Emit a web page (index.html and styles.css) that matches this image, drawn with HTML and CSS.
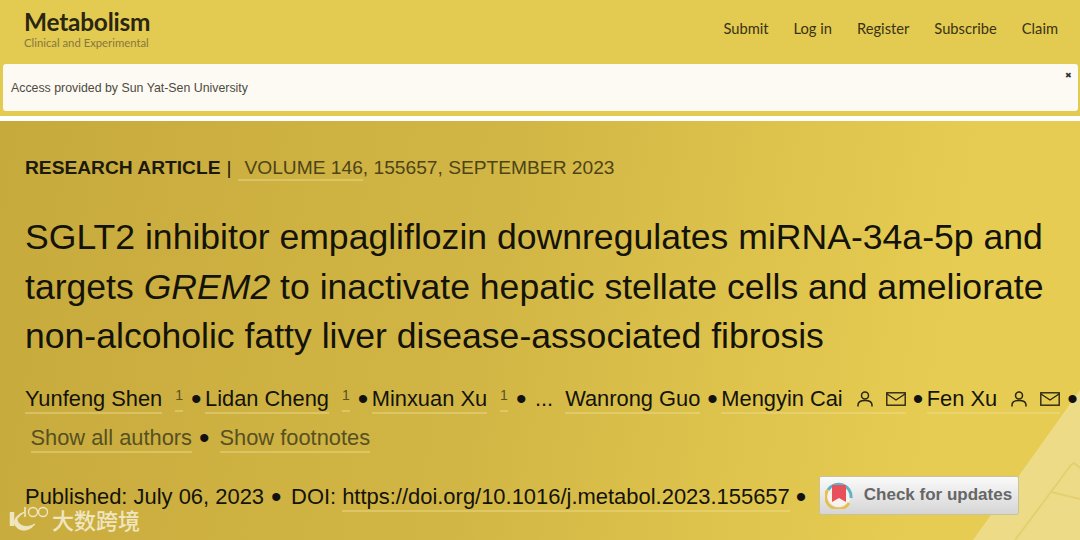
FILE: index.html
```html
<!DOCTYPE html>
<html lang="en">
<head>
<meta charset="utf-8">
<title>Metabolism article</title>
<link rel="stylesheet" href="styles.css">
</head>
<body>
<header class="topbar">
  <div class="brand">
    <div class="brand-name">Metabolism</div>
    <div class="brand-sub">Clinical and Experimental</div>
  </div>
  <nav class="nav">
    <a>Submit</a><a>Log in</a><a>Register</a><a>Subscribe</a><a>Claim</a>
  </nav>
</header>
<div class="notice">
  <span>Access provided by Sun Yat-Sen University</span>
  <span class="notice-close">&#10006;</span>
</div>
<div class="stripe"></div>
<main class="hero">
  <svg class="decor" width="107" height="150" viewBox="0 0 107 150" aria-hidden="true">
    <polygon points="107,0 107,150 0,150" fill="#eddb87"/>
    <path d="M107 78 L101 73 L98 75 L78 102 L107 109 M78 102 L42 150" fill="none" stroke="#e5d070" stroke-width="2"/>
  </svg>
  <div class="meta"><b>RESEARCH ARTICLE</b><span class="sep">|</span><a class="link vol">VOLUME 146</a>, 155657, SEPTEMBER 2023</div>
  <h1 class="title">SGLT2 inhibitor empagliflozin downregulates miRNA-34a-5p and targets <i>GREM2</i> to inactivate hepatic stellate cells and ameliorate non-alcoholic fatty liver disease-associated fibrosis</h1>
  <div class="authors">
    <a class="link">Yunfeng Shen</a><a class="link sup">1</a><span class="dot">&#8226;</span>
    <a class="link">Lidan Cheng</a><a class="link sup">1</a><span class="dot">&#8226;</span>
    <a class="link">Minxuan Xu</a><a class="link sup">1</a><span class="dot">&#8226;</span>
    <span class="ellipsis">...</span>
    <a class="link">Wanrong Guo</a><span class="dot">&#8226;</span>
    <a class="link with-icons">Mengyin Cai
      <svg class="ic-person" width="16" height="16" viewBox="0 0 16 16"><circle cx="8" cy="4.600" r="3.500"/><path d="M1 15.500v-1.500c0-3 3-4.600 7-4.600s7 1.600 7 4.600v1.500"/></svg>
      <svg class="ic-mail" width="20" height="14" viewBox="0 0 20 14"><rect x=".8" y=".8" width="18.400" height="12.400"/><path d="M1 2l9 6 9-6"/></svg>
    </a><span class="dot">&#8226;</span>
    <a class="link with-icons">Fen Xu
      <svg class="ic-person" width="16" height="16" viewBox="0 0 16 16"><circle cx="8" cy="4.600" r="3.500"/><path d="M1 15.500v-1.500c0-3 3-4.600 7-4.600s7 1.600 7 4.600v1.500"/></svg>
      <svg class="ic-mail" width="20" height="14" viewBox="0 0 20 14"><rect x=".8" y=".8" width="18.400" height="12.400"/><path d="M1 2l9 6 9-6"/></svg>
    </a><span class="dot">&#8226;</span>
  </div>
  <div class="toggles">
    <a class="link muted">Show all authors</a><span class="dot">&#8226;</span><a class="link muted foot">Show footnotes</a>
  </div>
  <div class="pub">
    <span>Published: July 06, 2023</span><span class="dot">&#8226;</span>
    <span class="doi">DOI:</span><a class="link">https://doi.org/10.1016/j.metabol.2023.155657</a><span class="dot">&#8226;</span>
    <span class="crossmark">
      <svg class="cm-icon" width="28" height="28" viewBox="0 0 28 28" aria-hidden="true">
        <circle cx="14" cy="14" r="12" fill="#f6f3ec"/>
        <path d="M3 9A12.500 12.500 0 0 1 26 17" fill="none" stroke="#5fb3c9" stroke-width="3"/>
        <path d="M2.500 9A12.500 12.500 0 0 0 24 22" fill="none" stroke="#e6bf4e" stroke-width="3"/>
        <path d="M7 4h14v17l-7-4-7 4z" fill="#e8505b"/>
      </svg>
      <span>Check for updates</span>
    </span>
  </div>
  <div class="watermark">
    <svg class="wm-logo" width="42" height="28" viewBox="0 0 42 28" aria-hidden="true">
      <path d="M3 7v14" fill="none" stroke="#efe6c0" stroke-width="4.500"/>
      <path d="M16 7C11 10 8 13 8 15c2 6 9 9 18 4-6 8-16 8-20 1-2-5 2-11 10-13z" fill="#efe6c0" stroke="#efe6c0"/>
      <path d="M16 2v10" fill="none" stroke="#efe6c0" stroke-width="1.600"/>
      <circle cx="24" cy="7" r="4.500" fill="none" stroke="#efe6c0" stroke-width="1.400"/>
      <circle cx="34" cy="7" r="4.500" fill="none" stroke="#efe6c0" stroke-width="1.400"/>
    </svg>
    <span>大数跨境</span>
  </div>
</main>
</body>
</html>
```
FILE: styles.css
```css
* { box-sizing: border-box; }
html, body { margin: 0; height: 100%; }
body {
  width: 1080px; height: 540px; overflow: hidden;
  background: #e3ca50;
  font-family: "Liberation Sans", Arial, sans-serif;
  color: #1c1a0c;
  display: flex; flex-direction: column;
}
.topbar {
  height: 64px; padding: 7px 22px 0 24px;
  display: flex; justify-content: space-between; align-items: flex-start;
  font-family: Lato, sans-serif;
}
.brand-name { font-size: 24.400px; line-height: 29px; font-weight: 700; letter-spacing: -.2px; color: #2a2612; }
.brand-sub { font-size: 11.300px; line-height: 13px; color: #85773f; }
.nav { display: flex; gap: 25px; font-size: 14.700px; line-height: 20px; margin-top: 10.500px; color: #3a3315; }
.notice {
  height: 47px; margin: 0 2px 0 3px;
  background: #fcfaf3; border-radius: 3px;
  display: flex; justify-content: space-between;
  padding: 0 6px 0 8px;
  font-size: 12.350px; color: #4d4a3e; line-height: 48px;
}
.notice-close { font-size: 8px; line-height: 24px; color: #333; }
.stripe { height: 5px; margin-top: 5px; background: #fff; flex: none; }
.hero {
  position: relative; flex: 1; min-height: 0; overflow: hidden;
  padding: 34px 0 0 25px;
  background: linear-gradient(100deg, #c7aa3c 0%, #d2b645 45%, #e6cc52 85%);
}
.decor { position: absolute; right: 0; bottom: 0; }
.link { padding-bottom: 1px; border-bottom: 2px solid rgba(240,226,150,.4); }
.meta { position: relative; font-size: 19.200px; line-height: 26px; color: #4d4418; }
.meta b { color: #1c1a0c; }
.sep { margin: 0 0 0 6px; color: #1c1a0c; }
.vol { margin-left: 7px; padding-left: 6px; }
.title { position: relative; margin: 32px 0 0; font-size: 35.600px; line-height: 49.500px; font-weight: 400; color: #14130a; width: 1040px; }
.authors, .toggles, .pub { position: relative; font-size: 21.850px; line-height: 32px; white-space: nowrap; color: #14130a; display: flex; align-items: center; }
.authors .link, .toggles .link, .pub .link { line-height: 24px; margin-top: 3px; }
.authors { margin-top: 21px; }
.authors .sup { margin-left: 13px; width: 9px; height: 27px; margin-top: 0; text-align: center; font-size: 14px; color: #5a5020; line-height: 20px; }
.dot { flex: none; width: 10px; text-align: center; margin: 0 4px 0 7px; font-size: 30px; line-height: 32px; color: #111; }
.sup + .dot { margin-left: 8px; }
.ellipsis { margin: 0 12px 0 5px; }
.with-icons { display: inline-flex; align-items: center; }
.ic-person { flex: none; margin-left: 14px; fill: none; stroke: #2a2610; stroke-width: 1.500; }
.ic-mail { flex: none; margin-left: 13px; fill: none; stroke: #2a2610; stroke-width: 1.400; }
.toggles { margin-top: 7px; padding-left: 5.500px; }
.toggles .muted { color: #575022; }
.toggles .foot { margin-left: 6.500px; }
.pub { margin-top: 22px; font-size: 21.950px; }
.doi { margin: 0 6px 0 6px; }
.doi ~ .dot { margin-left: 6px; }
.crossmark {
  margin: 0 0 4px 9px; width: 200px; height: 39px; padding: 0 0 1px 5px; gap: 11px;
  display: inline-flex; align-items: center; flex: none;
  background: linear-gradient(#fafafa, #d5d5d5);
  border: 1px solid #c9c39a; border-radius: 2px;
  font-size: 17px; font-weight: 700; color: #666;
}
.cm-icon { flex: none; }
.watermark {
  position: absolute; left: 9px; bottom: 7px;
  display: flex; align-items: center; gap: 1px;
  color: #efe6c0; font-size: 22px; line-height: 28px; font-weight: 500;
  font-family: "Noto Sans CJK SC", sans-serif;
}
.wm-logo { flex: none; }
```
